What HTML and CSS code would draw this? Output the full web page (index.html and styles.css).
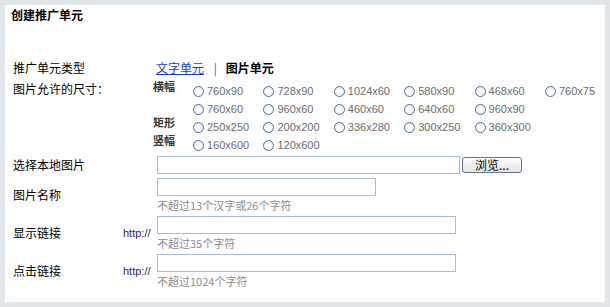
FILE: index.html
```html
<!DOCTYPE html>
<html lang="zh-CN">
<head>
    <meta charset="UTF-8">
    <title>创建推广单元</title>
    <link rel="stylesheet" href="styles.css">
</head>
<body>
    <div class="panel">
        <h1 class="title">创建推广单元</h1>

        <div class="row type-row">
            <span class="label">推广单元类型</span>
            <div class="types">
                <a href="#" class="type-link">文字单元</a>
                <span class="sep">|</span>
                <b class="type-cur">图片单元</b>
            </div>
        </div>

        <div class="row size-row">
            <span class="label label-top">图片允许的尺寸：</span>
            <div class="sizes">
                <span class="size-tag">横幅</span>
                <label class="size"><input type="radio" name="size">760x90</label>
                <label class="size"><input type="radio" name="size">728x90</label>
                <label class="size"><input type="radio" name="size">1024x60</label>
                <label class="size"><input type="radio" name="size">580x90</label>
                <label class="size"><input type="radio" name="size">468x60</label>
                <label class="size"><input type="radio" name="size">760x75</label>

                <span class="size-tag"></span>
                <label class="size"><input type="radio" name="size">760x60</label>
                <label class="size"><input type="radio" name="size">960x60</label>
                <label class="size"><input type="radio" name="size">460x60</label>
                <label class="size"><input type="radio" name="size">640x60</label>
                <label class="size"><input type="radio" name="size">960x90</label>
                <span></span>

                <span class="size-tag">矩形</span>
                <label class="size"><input type="radio" name="size">250x250</label>
                <label class="size"><input type="radio" name="size">200x200</label>
                <label class="size"><input type="radio" name="size">336x280</label>
                <label class="size"><input type="radio" name="size">300x250</label>
                <label class="size"><input type="radio" name="size">360x300</label>
                <span></span>

                <span class="size-tag">竖幅</span>
                <label class="size"><input type="radio" name="size">160x600</label>
                <label class="size"><input type="radio" name="size">120x600</label>
            </div>
        </div>

        <div class="row field-row file-row">
            <span class="label">选择本地图片</span>
            <span class="pre"></span>
            <div class="field">
                <div class="file-line">
                    <input type="text" class="box box-file">
                    <button type="button" class="browse">浏览...</button>
                </div>
            </div>
        </div>

        <div class="row field-row">
            <span class="label">图片名称</span>
            <span class="pre"></span>
            <div class="field">
                <input type="text" class="box box-name">
                <div class="hint">不超过13个汉字或26个字符</div>
            </div>
        </div>

        <div class="row field-row">
            <span class="label">显示链接</span>
            <span class="pre">http://</span>
            <div class="field">
                <input type="text" class="box box-url">
                <div class="hint">不超过35个字符</div>
            </div>
        </div>

        <div class="row field-row">
            <span class="label">点击链接</span>
            <span class="pre">http://</span>
            <div class="field">
                <input type="text" class="box box-url">
                <div class="hint">不超过1024个字符</div>
            </div>
        </div>
    </div>
</body>
</html>
```

FILE: styles.css
```css
html, body {
    height: 100%;
}
body {
    margin: 0;
    padding: 5px;
    box-sizing: border-box;
    background-color: #e1e6ea;
    font-family: "Noto Sans CJK SC", "Liberation Sans", sans-serif;
    font-size: 12px;
    color: #000;
}
.panel {
    background-color: #fff;
    width: 600px;
    height: 297px;
    box-sizing: border-box;
    padding-left: 8px;
}
.title {
    margin: 0 0 0 -2px;
    font-size: 12px;
    font-weight: bold;
    line-height: 20px;
}
.row {
    display: flex;
    align-items: center;
}
.label {
    width: 110px;
    flex: none;
    line-height: 18px;
}
.type-row {
    margin-top: 34px;
    line-height: 18px;
}
.types {
    margin-left: 33px;
}
.type-link {
    color: #1a3acc;
    text-decoration: underline;
}
.sep {
    color: #c0288a;
    margin: 0 6px 0 7px;
}
.type-cur {
    font-weight: bold;
}
.size-row {
    align-items: flex-start;
    margin-top: 5px;
}
.label-top {
    line-height: 14px;
}
.sizes {
    margin-left: 30px;
    display: grid;
    grid-template-columns: 40px repeat(5, 70.4px) 52px;
    grid-auto-rows: 18px;
}
.size-tag {
    font-size: 11px;
    font-weight: bold;
    color: #333;
    line-height: 12px;
    margin-top: -2px;
}
.size {
    display: flex;
    align-items: center;
    font-family: "Liberation Sans", Arial, sans-serif;
    font-size: 11px;
    color: #6b6b6b;
    white-space: nowrap;
}
.size input {
    -webkit-appearance: none;
    appearance: none;
    width: 11px;
    height: 11px;
    margin: 0 3px 0 0;
    border: 1px solid #4f6d93;
    border-radius: 50%;
    background: radial-gradient(circle at 50% 60%, #ffffff 30%, #dfe6ef 100%);
    box-sizing: border-box;
}
.field-row {
    margin-top: 4px;
}
.file-row {
    margin-top: 2px;
    margin-bottom: 3px;
}
.pre {
    width: 34px;
    flex: none;
    font-family: "Liberation Sans", Arial, sans-serif;
    font-size: 11px;
    color: #34195a;
}
.field {
    display: flex;
    flex-direction: column;
}
.file-line {
    display: flex;
    align-items: center;
}
.box {
    height: 18px;
    box-sizing: border-box;
    border: 1px solid #a7bbd2;
    padding: 0 3px;
    margin: 0;
    font-size: 12px;
    outline: none;
}
.box-file {
    width: 303px;
}
.box-name {
    width: 219px;
}
.box-url {
    width: 299px;
}
.browse {
    margin-left: 2px;
    width: 60px;
    height: 16px;
    padding: 0;
    border: 1px solid #5f728c;
    border-radius: 3px;
    background: linear-gradient(#ffffff, #e4e4e4);
    font-family: "Noto Sans CJK SC", sans-serif;
    font-size: 12px;
    line-height: 14px;
    color: #000;
}
.hint {
    margin-top: 2px;
    font-size: 11px;
    line-height: 14px;
    color: #8c8c8c;
}
```
